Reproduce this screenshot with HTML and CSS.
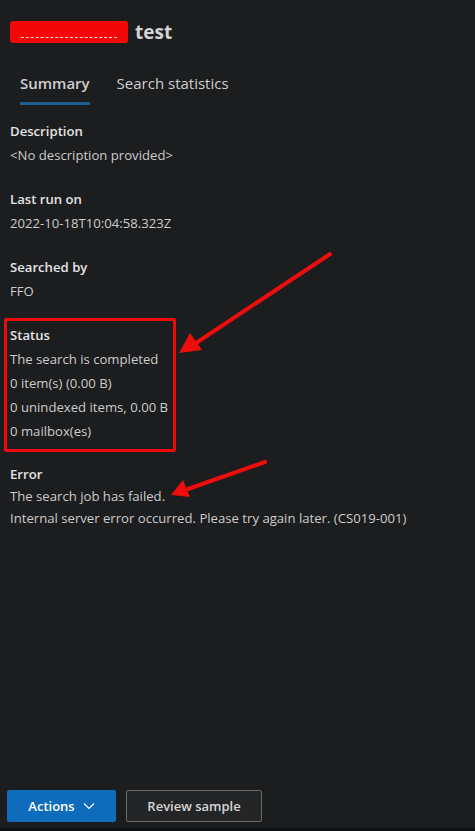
FILE: index.html
```html
<!DOCTYPE html>
<html lang="en">
<head>
<meta charset="utf-8">
<link rel="stylesheet" href="styles.css">
</head>
<body>
<div class="panel">
  <header class="title-row">
    <span class="redact"><span class="redact-line"></span></span>
    <h1 class="title">test</h1>
  </header>
  <nav class="tabs">
    <span class="tab tab-active">Summary</span>
    <span class="tab">Search statistics</span>
  </nav>
  <main class="content">
    <section class="field">
      <div class="label">Description</div>
      <div class="value">&lt;No description provided&gt;</div>
    </section>
    <section class="field">
      <div class="label">Last run on</div>
      <div class="value">2022-10-18T10:04:58.323Z</div>
    </section>
    <section class="field">
      <div class="label">Searched by</div>
      <div class="value">FFO</div>
    </section>
    <section class="field field-status">
      <div class="label">Status</div>
      <div class="value">The search is completed</div>
      <div class="value">0 item(s) (0.00 B)</div>
      <div class="value">0 unindexed items, 0.00 B</div>
      <div class="value">0 mailbox(es)</div>
    </section>
    <section class="field field-error">
      <div class="label tight">Error</div>
      <div class="value tight">The search job has failed.</div>
      <div class="value tight">Internal server error occurred. Please try again later. (CS019-001)</div>
    </section>
  </main>
  <footer class="footer">
    <button class="btn btn-primary">Actions
      <svg class="chev" width="12" height="8" viewBox="0 0 12 8"><path d="M1 1.5 L6 6.5 L11 1.5" fill="none" stroke="#ffffff" stroke-width="1.2"/></svg>
    </button>
    <button class="btn btn-default">Review sample</button>
  </footer>
  <svg class="arrows" width="475" height="831" viewBox="0 0 475 831">
    <line x1="330" y1="254" x2="196" y2="343" stroke="#ee0d0d" stroke-width="4" stroke-linecap="round"/>
    <polygon points="179,353 190,333 202,350" fill="#ee0d0d"/>
    <line x1="265" y1="462" x2="188" y2="489" stroke="#ee0d0d" stroke-width="4" stroke-linecap="round"/>
    <polygon points="171,495 183,480 190,497" fill="#ee0d0d"/>
  </svg>
</div>
</body>
</html>
```
FILE: styles.css
```css
* { box-sizing: border-box; }
html, body {
  margin: 0;
  padding: 0;
  background: #1c1d1f;
}
body {
  font-family: "Open Sans", "Noto Sans", sans-serif;
  color: #d0d0d0;
}
.panel {
  position: relative;
  width: 475px;
  height: 831px;
  display: flex;
  flex-direction: column;
  border-bottom: 3px solid #111213;
}
.title-row {
  display: flex;
  align-items: center;
  gap: 7px;
  padding: 21px 0 0 10px;
  height: 43px;
}
.redact {
  display: inline-flex;
  align-items: flex-end;
  justify-content: center;
  width: 118px;
  height: 22px;
  background: #f20808;
  border-radius: 3px;
  padding-bottom: 5px;
}
.redact-line {
  width: 96px;
  border-bottom: 1px dashed #ffd6d6;
}
.title {
  margin: 0;
  font-size: 19px;
  font-weight: 700;
  color: #d4d4d4;
  line-height: 22px;
}
.tabs {
  display: flex;
  gap: 27px;
  padding: 0 0 0 20px;
  margin-top: 29px;
}
.tab {
  font-size: 15px;
  line-height: 22px;
  color: #cfcfcf;
  padding-bottom: 8px;
}
.tab-active {
  font-weight: 600;
  border-bottom: 3px solid #1d5d8f;
}
.content {
  padding: 14px 10px 0 10px;
  display: flex;
  flex-direction: column;
  gap: 20px;
}
.field {
  display: flex;
  flex-direction: column;
}
.label {
  font-size: 13.15px;
  font-weight: 600;
  color: #e4e4e4;
  line-height: 24px;
}
.value {
  font-size: 13.15px;
  color: #cccccc;
  line-height: 24px;
}
.tight { line-height: 22px; }
.value.tight { line-height: 22px; }
.field-status {
  margin: -5px 0 0 -6px;
  padding: 2px 2px 6px 3px;
  border: 3px solid #ee0a0a;
  border-radius: 2px;
  width: 172px;
}
.field-error { margin-top: -9px; }
.footer {
  margin-top: auto;
  display: flex;
  gap: 10px;
  padding: 0 0 6px 7px;
}
.btn {
  height: 32px;
  font-family: inherit;
  font-size: 13px;
  font-weight: 600;
  border-radius: 2px;
  display: inline-flex;
  align-items: center;
  justify-content: center;
  gap: 8px;
}
.btn-primary {
  width: 109px;
  background: #0f6cbd;
  border: 1px solid #0f6cbd;
  color: #ffffff;
}
.btn-default {
  width: 136px;
  background: #242526;
  border: 1px solid #6a6a6a;
  color: #d6d6d6;
}
.arrows {
  position: absolute;
  left: 0;
  top: 0;
  pointer-events: none;
}
```
